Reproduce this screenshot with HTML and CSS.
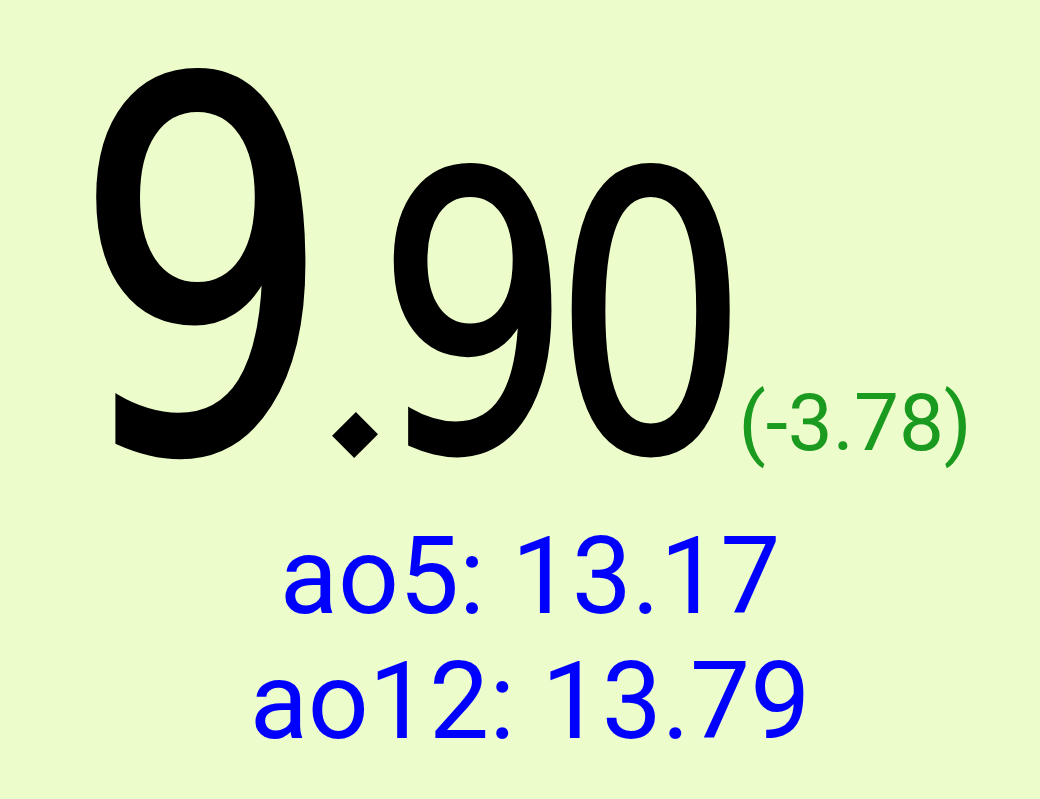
FILE: index.html
```html
<!DOCTYPE html>
<html lang="en">
<head>
<meta charset="utf-8">
<title>Timer</title>
<link rel="stylesheet" href="styles.css">
</head>
<body>
<main class="timer">
  <div class="time-row">
    <span class="seg seg-big"><span class="squeeze squeeze-big">9</span></span><span class="seg seg-dot"><span class="dot-glyph">.</span></span><span class="seg seg-small"><span class="squeeze squeeze-small">90</span></span><span class="delta">(-3.78)</span>
  </div>
  <div class="averages">
    <div class="avg">ao5: 13.17</div>
    <div class="avg">ao12: 13.79</div>
  </div>
</main>
</body>
</html>
```

FILE: styles.css
```css
html, body {
  margin: 0;
  padding: 0;
}

body {
  background: #ecfcca;
  width: 1040px;
  height: 799px;
  overflow: hidden;
}

.timer {
  display: flex;
  flex-direction: column;
}

.time-row {
  box-sizing: border-box;
  height: 514px;
  padding-top: 17px;
  padding-left: 72px;
  display: flex;
  align-items: baseline;
  white-space: nowrap;
  color: #000;
}

.seg {
  display: inline-block;
  font-family: "DejaVu Sans", sans-serif;
  font-weight: 400;
  line-height: 1;
}

.seg-big {
  font-size: 512px;
}

.seg-small {
  font-size: 384px;
}

.squeeze {
  display: inline-block;
  transform: scaleX(0.8);
  transform-origin: 0 0;
  -webkit-text-stroke: 4px #000;
}

.squeeze-big {
  margin-right: -65px;
}

.squeeze-small {
  letter-spacing: -23px;
  margin-right: -88px;
}

.seg-dot {
  font-size: 178px;
  font-weight: 700;
  width: 43px;
}

.dot-glyph {
  display: inline-block;
  transform-origin: 33px 134px;
  transform: translate(-12px, 1px) rotate(45deg);
}

.delta {
  margin-left: 8px;
  font-family: Roboto, sans-serif;
  font-size: 80px;
  line-height: 1;
  color: #1a9a1e;
}

.averages {
  padding-left: 20px;
  text-align: center;
  font-family: Roboto, sans-serif;
  font-size: 107px;
  line-height: 125px;
  color: #0000ff;
}
```
